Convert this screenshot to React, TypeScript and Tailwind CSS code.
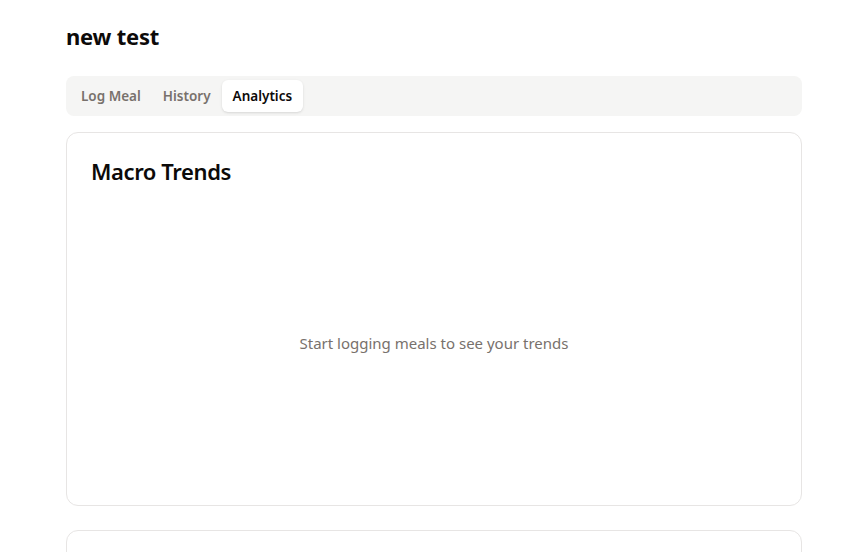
export default function App() {
  const tabs = ["Log Meal", "History", "Analytics"];
  const active = "Analytics";

  return (
    <div
      className="min-h-screen bg-white text-[#0c0a09]"
      style={{ fontFamily: '"Noto Sans", "Open Sans", sans-serif' }}
    >
      <div className="ml-[66px] w-[736px] pt-[22px] pb-10">
        <h1 className="text-[22px] font-bold leading-[28px] tracking-[-0.2px]">new test</h1>

        <div className="mt-[26px] flex h-[40px] items-center rounded-lg bg-[#f5f5f4] p-1">
          {tabs.map((tab) => (
            <button
              key={tab}
              className={`h-[32px] rounded-md px-[11px] text-[13.5px] font-semibold ${
                tab === active ? "bg-white text-[#0c0a09] shadow-sm" : "text-[#78716c]"
              }`}
            >
              {tab}
            </button>
          ))}
        </div>

        <div className="mt-4 rounded-xl border border-[#e7e5e4] bg-white p-6">
          <h2 className="text-[22px] font-semibold leading-7 tracking-[-0.4px]">Macro Trends</h2>
          <div className="mt-5 flex h-[276px] items-center justify-center">
            <p className="text-[15px] text-[#78716c]">Start logging meals to see your trends</p>
          </div>
        </div>

        <div className="mt-6 h-[200px] rounded-xl border border-[#e7e5e4] bg-white" />
      </div>
    </div>
  );
}
